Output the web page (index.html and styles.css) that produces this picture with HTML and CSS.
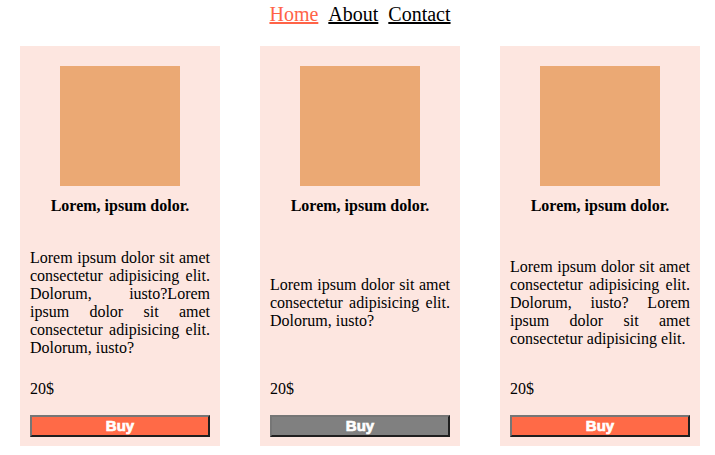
FILE: index.html
```html
<!DOCTYPE html>
<html>
<head>
<meta charset="utf-8">
<link rel="stylesheet" href="styles.css">
</head>
<body>
<nav class="nav">
  <a class="nav-link active" href="#">Home</a>
  <a class="nav-link" href="#">About</a>
  <a class="nav-link" href="#">Contact</a>
</nav>
<main class="cards">
  <div class="card">
    <div class="thumb"></div>
    <div class="title">Lorem, ipsum dolor.</div>
    <div class="desc-wrap"><p class="desc">Lorem ipsum dolor sit amet consectetur adipisicing elit. Dolorum, iusto?Lorem ipsum dolor sit amet consectetur adipisicing elit. Dolorum, iusto?</p></div>
    <div class="price">20$</div>
    <button class="buy">Buy</button>
  </div>
  <div class="card">
    <div class="thumb"></div>
    <div class="title">Lorem, ipsum dolor.</div>
    <div class="desc-wrap"><p class="desc">Lorem ipsum dolor sit amet consectetur adipisicing elit. Dolorum, iusto?</p></div>
    <div class="price">20$</div>
    <button class="buy buy-disabled">Buy</button>
  </div>
  <div class="card">
    <div class="thumb"></div>
    <div class="title">Lorem, ipsum dolor.</div>
    <div class="desc-wrap"><p class="desc">Lorem ipsum dolor sit amet consectetur adipisicing elit. Dolorum, iusto? Lorem ipsum dolor sit amet consectetur adipisicing elit.</p></div>
    <div class="price">20$</div>
    <button class="buy">Buy</button>
  </div>
</main>
</body>
</html>
```
FILE: styles.css
```css
html, body {
  margin: 0;
  padding: 0;
  background: #ffffff;
  font-family: "Liberation Serif", "Times New Roman", serif;
  color: #000;
}
.nav {
  display: flex;
  justify-content: center;
  gap: 10px;
  padding: 3px 0 0 5px;
  font-size: 20px;
  line-height: 23px;
}
.nav-link {
  color: #000;
  text-decoration: underline;
}
.nav-link.active {
  color: #ff6347;
}
.cards {
  display: flex;
  gap: 40px;
  padding: 20px 0 0 20px;
}
.card {
  width: 200px;
  height: 400px;
  box-sizing: border-box;
  background: #fde6e0;
  padding: 20px 10px 9px;
  display: flex;
  flex-direction: column;
}
.thumb {
  width: 120px;
  height: 120px;
  background: #eba974;
  align-self: center;
  flex: none;
}
.title {
  margin-top: 11px;
  font-weight: bold;
  font-size: 16px;
  line-height: 18px;
  text-align: center;
}
.desc-wrap {
  flex: 1;
  display: flex;
  align-items: center;
  padding-top: 10px;
}
.desc {
  margin: 0;
  font-size: 16px;
  line-height: 18px;
  text-align: justify;
}
.price {
  font-size: 16px;
  line-height: 18px;
  margin-bottom: 17px;
}
.buy {
  height: 22px;
  width: 180px;
  box-sizing: border-box;
  padding: 0;
  background: #ff6a47;
  color: #fff;
  font-family: "Liberation Sans", Arial, sans-serif;
  font-weight: 900;
  font-size: 15px;
  line-height: 18px;
  border: 2px solid;
  border-color: #767676 #1f1f1f #1f1f1f #767676;
  -webkit-text-stroke: 0.7px #fff;
}
.buy-disabled {
  background: #808080;
}
```
